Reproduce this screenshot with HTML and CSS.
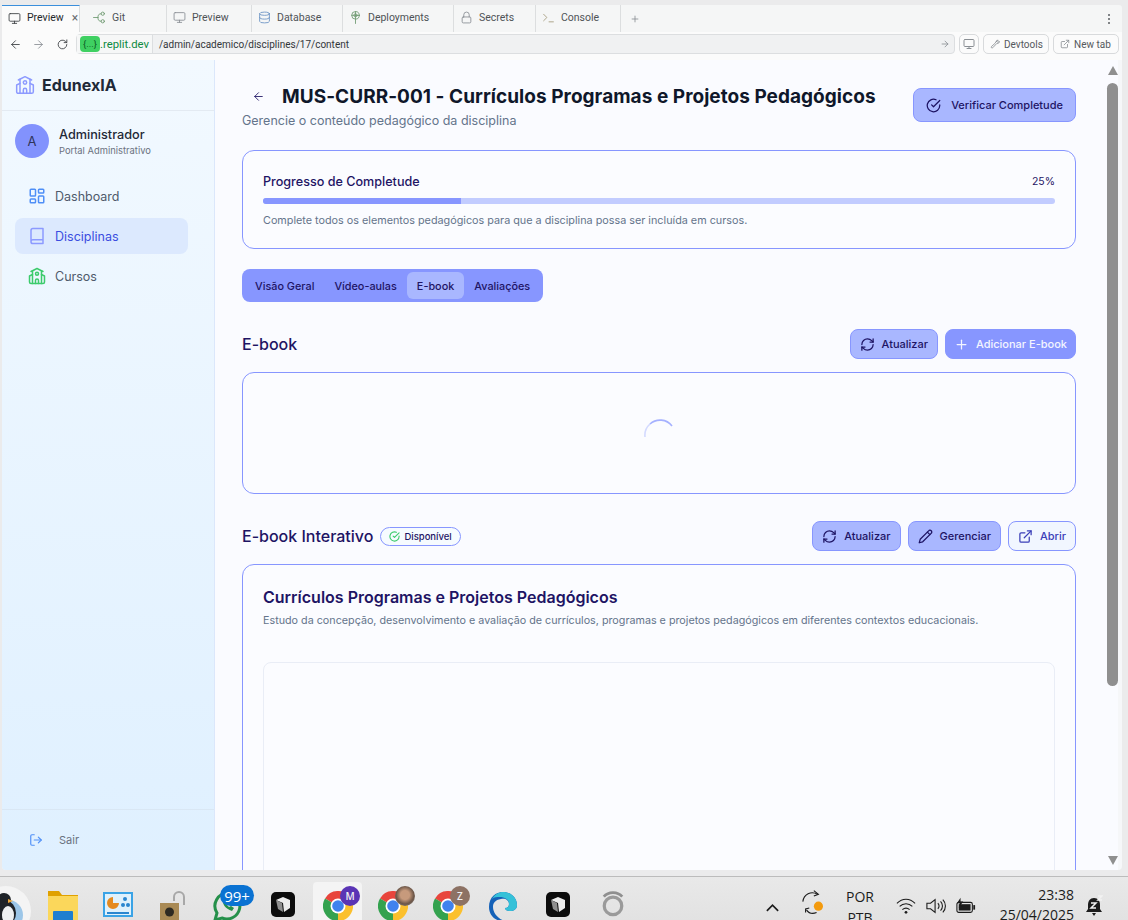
FILE: index.html
```html
<!DOCTYPE html>
<html lang="pt-BR">
<head>
<meta charset="utf-8">
<title>EdunexIA</title>
<link rel="stylesheet" href="styles.css">
</head>
<body>
<svg class="sprite" aria-hidden="true">
  <symbol id="i-school" viewBox="0 0 24 24"><path d="m4 6 8-4 8 4"/><path d="m18 10 4 2v8a2 2 0 0 1-2 2H4a2 2 0 0 1-2-2v-8l4-2"/><path d="M14 22v-4a2 2 0 0 0-4 0v4"/><path d="M18 5v17"/><path d="M6 5v17"/><circle cx="12" cy="9" r="2"/></symbol>
  <symbol id="i-dash" viewBox="0 0 24 24"><rect x="3" y="3" width="7" height="9" rx="1"/><rect x="14" y="3" width="7" height="5" rx="1"/><rect x="14" y="12" width="7" height="9" rx="1"/><rect x="3" y="16" width="7" height="5" rx="1"/></symbol>
  <symbol id="i-book" viewBox="0 0 24 24"><path d="M4 19.5v-15A2.5 2.5 0 0 1 6.5 2H20v20H6.5a2.5 2.5 0 0 1 0-5H20"/></symbol>
  <symbol id="i-logout" viewBox="0 0 24 24"><path d="M9 21H5a2 2 0 0 1-2-2V5a2 2 0 0 1 2-2h4"/><path d="m16 17 5-5-5-5"/><path d="M21 12H9"/></symbol>
  <symbol id="i-left" viewBox="0 0 24 24"><path d="m12 19-7-7 7-7"/><path d="M19 12H5"/></symbol>
  <symbol id="i-right" viewBox="0 0 24 24"><path d="m12 5 7 7-7 7"/><path d="M5 12h14"/></symbol>
  <symbol id="i-check" viewBox="0 0 24 24"><path d="M22 11.08V12a10 10 0 1 1-5.93-9.14"/><path d="m9 11 3 3L22 4"/></symbol>
  <symbol id="i-refresh" viewBox="0 0 24 24"><path d="M3 12a9 9 0 0 1 9-9 9.75 9.75 0 0 1 6.74 2.74L21 8"/><path d="M21 3v5h-5"/><path d="M21 12a9 9 0 0 1-9 9 9.75 9.75 0 0 1-6.74-2.74L3 16"/><path d="M8 16H3v5"/></symbol>
  <symbol id="i-reload" viewBox="0 0 24 24"><path d="M20 12a8 8 0 1 1-2.4-5.7L20 8.5"/><path d="M20 3.5v5h-5"/></symbol>
  <symbol id="i-plus" viewBox="0 0 24 24"><path d="M5 12h14"/><path d="M12 5v14"/></symbol>
  <symbol id="i-pencil" viewBox="0 0 24 24"><path d="M17 3a2.85 2.83 0 1 1 4 4L7.5 20.5 2 22l1.5-5.5Z"/><path d="m15 5 4 4"/></symbol>
  <symbol id="i-ext" viewBox="0 0 24 24"><path d="M15 3h6v6"/><path d="M10 14 21 3"/><path d="M18 13v6a2 2 0 0 1-2 2H5a2 2 0 0 1-2-2V8a2 2 0 0 1 2-2h6"/></symbol>
  <symbol id="i-monitor" viewBox="0 0 24 24"><rect x="2" y="3" width="20" height="14" rx="2"/><path d="M8 21h8"/><path d="M12 17v4"/></symbol>
  <symbol id="i-git" viewBox="0 0 24 24"><path d="M1 12h8"/><path d="M9 12c0-5 2-7 6-7"/><path d="M9 12c0 5 2 7 6 7"/><circle cx="18" cy="5" r="3"/><circle cx="18" cy="19" r="3"/></symbol>
  <symbol id="i-db" viewBox="0 0 24 24"><ellipse cx="12" cy="5" rx="9" ry="3"/><path d="M3 5v14a9 3 0 0 0 18 0V5"/><path d="M3 12a9 3 0 0 0 18 0"/></symbol>
  <symbol id="i-deploy" viewBox="0 0 24 24"><circle cx="12" cy="8" r="7"/><circle cx="12" cy="8" r="3"/><path d="M12 1v22"/><path d="M5 8h14"/></symbol>
  <symbol id="i-lock" viewBox="0 0 24 24"><rect x="4" y="11" width="16" height="11" rx="2"/><path d="M7 11V7a5 5 0 0 1 10 0v4"/></symbol>
  <symbol id="i-term" viewBox="0 0 24 24"><path d="m3 6 6 6-6 6"/><path d="M13 20h8"/></symbol>
  <symbol id="i-wrench" viewBox="0 0 24 24"><path d="M14.7 6.3a4 4 0 0 1 5-3.4l-3 3 2.400 2.400 3-3a4 4 0 0 1-5.400 5L6.500 21a2 2 0 0 1-3-3l9.200-8.200a4 4 0 0 1 2-3.500Z"/></symbol>
  <symbol id="i-chrome" viewBox="0 0 30 30"><path class="c-red" d="M15 15 2 7.500A15 15 0 0 1 28 7.500Z"/><path class="c-yel" d="M15 15 28 7.500A15 15 0 0 1 15 30Z"/><path class="c-grn" d="M15 15V30A15 15 0 0 1 2 7.500Z"/><circle class="c-wht" cx="15" cy="15" r="7.500"/><circle class="c-blu" cx="15" cy="15" r="5.800"/></symbol>
  <symbol id="i-cube" viewBox="0 0 24 30"><rect class="c-blk" width="24" height="25" y="0" rx="5"/><path class="c-lit" d="m12 5 7 3v8l-6 4-1-9-7-3Z"/><path class="c-mid" d="m5 8 6 3 1 9-5-3Z"/></symbol>
</svg>

<div class="screen">
  <header class="browser">
    <nav class="tabstrip">
      <div class="btab btab-active"><svg class="ic ic13 dark"><use href="#i-monitor"/></svg><span>Preview</span><span class="btab-x">×</span></div>
      <div class="btab btab-git"><svg class="ic ic13 git"><use href="#i-git"/></svg><span>Git</span></div>
      <div class="btab btab-prev"><svg class="ic ic13 grey"><use href="#i-monitor"/></svg><span>Preview</span></div>
      <div class="btab btab-db"><svg class="ic ic13 blue"><use href="#i-db"/></svg><span>Database</span></div>
      <div class="btab btab-dep"><svg class="ic ic13 git"><use href="#i-deploy"/></svg><span>Deployments</span></div>
      <div class="btab btab-sec"><svg class="ic ic13 grey"><use href="#i-lock"/></svg><span>Secrets</span></div>
      <div class="btab btab-con"><svg class="ic ic13 tan"><use href="#i-term"/></svg><span>Console</span></div>
      <svg class="ic ic10 grey add"><use href="#i-plus"/></svg>
      <div class="kebab"><i></i><i></i><i></i></div>
    </nav>
    <div class="urlrow">
      <svg class="ic ic13 dark nav-ic"><use href="#i-left"/></svg>
      <svg class="ic ic13 grey nav-ic nav-fwd"><use href="#i-right"/></svg>
      <svg class="ic ic13 dark nav-ic nav-rel"><use href="#i-reload"/></svg>
      <div class="urlbar">
        <div class="host"><span class="chip">{...}</span><span>.replit.dev</span></div>
        <span class="path">/admin/academico/disciplines/17/content</span>
        <svg class="ic ic10 grey go"><use href="#i-right"/></svg>
      </div>
      <button class="ubtn ubtn-ic"><svg class="ic ic12 grey"><use href="#i-monitor"/></svg></button>
      <button class="ubtn"><svg class="ic ic10 grey"><use href="#i-wrench"/></svg>Devtools</button>
      <button class="ubtn"><svg class="ic ic10 grey"><use href="#i-ext"/></svg>New tab</button>
    </div>
  </header>

  <div class="app">
    <aside class="sidebar">
      <div class="brand"><svg class="ic ic20 indigo"><use href="#i-school"/></svg><span>EdunexIA</span></div>
      <div class="user">
        <div class="avatar">A</div>
        <div>
          <div class="user-name">Administrador</div>
          <div class="user-role">Portal Administrativo</div>
        </div>
      </div>
      <nav class="side-nav">
        <a class="side-item"><svg class="ic ic18 sideblue"><use href="#i-dash"/></svg>Dashboard</a>
        <a class="side-item side-active"><svg class="ic ic18 indigo"><use href="#i-book"/></svg>Disciplinas</a>
        <a class="side-item"><svg class="ic ic18 green"><use href="#i-school"/></svg>Cursos</a>
      </nav>
      <div class="side-foot"><svg class="ic ic14 sideblue"><use href="#i-logout"/></svg><span>Sair</span></div>
    </aside>

    <main class="main">
      <div class="page-head">
        <div>
          <div class="title-row">
            <svg class="ic ic13 navy back"><use href="#i-left"/></svg>
            <h1>MUS-CURR-001 - Currículos Programas e Projetos Pedagógicos</h1>
          </div>
          <p class="sub">Gerencie o conteúdo pedagógico da disciplina</p>
        </div>
        <button class="btn btn-soft btn-verify"><svg class="ic ic15"><use href="#i-check"/></svg>Verificar Completude</button>
      </div>

      <section class="card progress-card">
        <div class="progress-row"><span class="progress-label">Progresso de Completude</span><span class="progress-val">25%</span></div>
        <div class="bar"><div class="bar-fill" style="width:25%"></div></div>
        <p class="hint">Complete todos os elementos pedagógicos para que a disciplina possa ser incluída em cursos.</p>
      </section>

      <div class="tabs">
        <span class="tab">Visão Geral</span>
        <span class="tab">Vídeo-aulas</span>
        <span class="tab tab-active">E-book</span>
        <span class="tab">Avaliações</span>
      </div>

      <div class="sec-head">
        <h2>E-book</h2>
        <div class="actions">
          <button class="btn btn-soft"><svg class="ic ic15"><use href="#i-refresh"/></svg>Atualizar</button>
          <button class="btn btn-solid"><svg class="ic ic15"><use href="#i-plus"/></svg>Adicionar E-book</button>
        </div>
      </div>
      <section class="card loading-card">
        <svg class="spinner" viewBox="0 0 32 32"><path class="spin-tail" d="M1 18A15 15 0 0 1 6 5"/><path class="spin-head" d="M6 5A15 15 0 0 1 28 7"/></svg>
      </section>

      <div class="sec-head">
        <div class="sec-title">
          <h2>E-book Interativo</h2>
          <span class="badge"><svg class="ic ic11 green"><use href="#i-check"/></svg>Disponível</span>
        </div>
        <div class="actions">
          <button class="btn btn-soft"><svg class="ic ic15"><use href="#i-refresh"/></svg>Atualizar</button>
          <button class="btn btn-soft"><svg class="ic ic15"><use href="#i-pencil"/></svg>Gerenciar</button>
          <button class="btn btn-line"><svg class="ic ic15"><use href="#i-ext"/></svg>Abrir</button>
        </div>
      </div>
      <section class="card ebook-card">
        <h3>Currículos Programas e Projetos Pedagógicos</h3>
        <p class="hint ebook-desc">Estudo da concepção, desenvolvimento e avaliação de currículos, programas e projetos pedagógicos em diferentes contextos educacionais.</p>
        <div class="viewer"></div>
      </section>
    </main>

    <div class="scrollbar">
      <i class="tri-up"></i>
      <div class="thumb"></div>
      <i class="tri-down"></i>
    </div>
  </div>

  <footer class="taskbar">
    <div class="tb-left">
      <div class="tb-peng">
        <svg class="peng" viewBox="0 0 32 34"><circle class="p-disc" cx="6" cy="25" r="25"/><circle class="p-sky" cx="8" cy="29" r="15"/><ellipse class="p-blk" cx="4" cy="14" rx="7" ry="7"/><ellipse class="p-blk" cx="6" cy="27" rx="10" ry="12"/><ellipse class="p-wht" cx="8" cy="29" rx="6" ry="9"/><path class="p-beak" d="M8 13l5 2-5 2Z"/></svg>
      </div>
      <div class="tb-slot"><svg class="tb-ic" viewBox="0 0 30 30"><path class="f-tab" d="M0 0h11l3 4h16v26H0Z"/><rect class="f-front" y="5" width="30" height="25"/><rect class="f-blue" x="5" y="20" width="20" height="10" rx="1"/></svg></div>
      <div class="tb-slot"><svg class="tb-ic" viewBox="0 0 30 30"><rect class="m-body" width="30" height="25" y="1"/><rect class="m-glass" x="2" y="3" width="26" height="21"/><path class="m-pie" d="M10 6a6 6 0 1 0 6 6h-6Z"/><circle class="m-dot" cx="22" cy="8" r="2"/><circle class="m-dot" cx="25" cy="14" r="2"/><circle class="m-dot" cx="20" cy="14" r="2"/><rect class="m-bar" x="4" y="21" width="22" height="2"/></svg></div>
      <div class="tb-slot"><svg class="tb-ic tb-lock" viewBox="0 0 26 30"><path class="l-shackle" d="M14 10V6a5 5 0 0 1 10 0v8"/><rect class="l-body" y="12" width="19" height="19"/><circle class="l-gear" cx="9.500" cy="21" r="4.500"/></svg></div>
      <div class="tb-slot">
        <svg class="tb-ic" viewBox="0 0 30 30"><path class="w-ring" d="M15 2a13 13 0 0 0-11 20l-2 7 7-2a13 13 0 1 0 6-25Z"/><path class="w-phone" d="M10 9c-1 3 2 9 9 11l2-3-3-2-2 1-3-3 1-2-2-3Z"/></svg>
        <span class="pill">99+</span>
      </div>
      <div class="tb-slot"><svg class="tb-ic tb-cube" viewBox="0 0 24 30"><use href="#i-cube"/></svg></div>
      <div class="tb-slot tb-active">
        <svg class="tb-ic"><use href="#i-chrome"/></svg>
        <span class="prof prof-m">M</span>
      </div>
      <div class="tb-slot">
        <svg class="tb-ic"><use href="#i-chrome"/></svg>
        <span class="prof prof-photo"></span>
      </div>
      <div class="tb-slot">
        <svg class="tb-ic"><use href="#i-chrome"/></svg>
        <span class="prof prof-z">Z</span>
      </div>
      <div class="tb-slot"><svg class="tb-ic" viewBox="0 0 30 30"><path class="e-blue" d="M1 16C1 6 8 1 15 1c8 0 14 6 14 13 0 4-3 6-7 6-3 0-5-1-5-3 3 0 4-2 4-4 0-4-4-6-8-5C7 9 5 12 5 16c0 6 5 12 12 14C8 31 1 25 1 16Z"/><path class="e-green" d="M4 8C7 3 11 1 15 1c8 0 14 6 14 13 0 4-3 6-7 6-3 0-5-1-5-3 3 0 4-2 4-4 0-5-5-7-9-7-3 0-6 0-8 2Z"/></svg></div>
      <div class="tb-slot"><svg class="tb-ic tb-cube" viewBox="0 0 24 30"><use href="#i-cube"/></svg></div>
      <div class="tb-slot"><svg class="tb-ic tb-ring" viewBox="0 0 26 34"><path class="r-arc" d="M3 8c5-6 15-6 20 0"/><circle class="r-o" cx="13" cy="18" r="9.500"/></svg></div>
    </div>
    <div class="tb-right">
      <svg class="tray-chev" viewBox="0 0 16 10"><path d="m2 8 6-6 6 6"/></svg>
      <svg class="tray-sync" viewBox="0 0 24 28"><path class="t-line" d="M2 13C3 5 11 1 18 5"/><path class="t-line" d="M14 1l5 4-5 2"/><path class="t-line" d="M17 25c-5 2-9 0-11-3"/><path class="t-line" d="M9 20l-4 1 0 4"/><circle class="t-dot" cx="19" cy="18" r="5"/></svg>
      <div class="tray-lang"><span>POR</span><span>PTB</span></div>
      <svg class="tray-ic" viewBox="0 0 22 18"><path class="t-line" d="M1 6c6-6 14-6 20 0"/><path class="t-line" d="M4 9.500c4-4 10-4 14 0"/><path class="t-line" d="M7 13c2.500-2 5.500-2 8 0"/><circle class="t-fill" cx="11" cy="16" r="1.500"/></svg>
      <svg class="tray-ic" viewBox="0 0 22 18"><path class="t-line" d="M1 6h4l5-4v14l-5-4H1Z"/><path class="t-line" d="M13 6a4 4 0 0 1 0 6"/><path class="t-line" d="M16 4a7 7 0 0 1 0 10"/><path class="t-line" d="M18.500 2a10 10 0 0 1 0 14"/></svg>
      <svg class="tray-ic" viewBox="0 0 22 18"><rect class="t-line" x="1" y="5" width="17" height="11" rx="2"/><rect class="t-fill" x="3" y="7" width="13" height="7"/><rect class="t-fill" x="19" y="8" width="2" height="5"/><path class="t-fill" d="M5 0 1 6h3l-1 5 5-7H5Z"/></svg>
      <div class="clock"><span>23:38</span><span>25/04/2025</span></div>
      <svg class="tray-bell" viewBox="0 0 18 24"><path class="t-fill" d="M9 4C5 4 3 7 3 11v4l-2 3h16l-2-3v-4c0-4-2-7-6-7Zm-2 15h4l-2 3Z"/><path class="t-zz" d="M6 9h5l-5 5h5"/><path class="t-zz" d="M13 2h4l-4 4h4"/></svg>
    </div>
  </footer>
</div>
</body>
</html>
```

FILE: styles.css
```css
* { box-sizing: border-box; }
html, body { margin: 0; padding: 0; }
body { width: 1128px; height: 920px; overflow: hidden; background: #ebebec; font-family: Inter, "Liberation Sans", sans-serif; }
.sprite { display: none; }
h1, h2, h3, p { margin: 0; }
button { font-family: inherit; cursor: pointer; }
.screen { width: 1128px; height: 920px; display: flex; flex-direction: column; overflow: hidden; }

/* icons */
.ic { flex: none; fill: none; stroke: currentColor; stroke-width: 2; stroke-linecap: round; stroke-linejoin: round; }
.ic10 { width: 10px; height: 10px; }
.ic11 { width: 11px; height: 11px; stroke-width: 2.4; }
.ic12 { width: 12px; height: 12px; }
.ic13 { width: 13px; height: 13px; stroke-width: 1.6; }
.ic14 { width: 14px; height: 14px; }
.ic15 { width: 15px; height: 15px; }
.ic18 { width: 18px; height: 18px; }
.ic20 { width: 20px; height: 20px; stroke-width: 1.8; }
.dark { color: #3c4043; }
.grey { color: #8a8f94; }
.git { color: #6f9a72; }
.blue { color: #6b93c4; }
.tan { color: #a39a7c; }
.indigo { color: #8c9aff; }
.sideblue { color: #4f8ff7; }
.green { color: #3ccb6c; }
.navy { color: #1e1464; }

/* browser chrome */
.browser { flex: none; height: 60px; padding: 5px 6px 0 2px; display: flex; flex-direction: column; }
.tabstrip { height: 27px; flex: none; display: flex; align-items: stretch; padding-bottom: 0; background: #f5f6f6; border-radius: 3px 3px 0 0; font: 10.500px/14px Roboto, sans-serif; color: #4f5357; }
.btab { display: flex; align-items: center; gap: 6px; padding-left: 13px; padding-bottom: 2px; border-right: 1px solid #dcdedf; }
.btab-active { width: 78px; padding-left: 6px; gap: 6px; background: #fbfbfb; color: #26292c; border-top: 1px solid #3b8fdc; }
.btab-x { margin-left: 2px; font-size: 12px; color: #6a6e72; }
.btab-git { width: 87px; }
.btab-prev { width: 85px; padding-left: 6px; }
.btab-db { width: 91px; padding-left: 6px; }
.btab-dep { width: 111px; padding-left: 6px; }
.btab-sec { width: 82px; padding-left: 6px; }
.btab-con { width: 85px; padding-left: 6px; }
.add { align-self: center; margin-left: 9px; }
.kebab { margin-left: auto; margin-right: 12px; align-self: center; display: flex; flex-direction: column; gap: 2px; }
.kebab i { display: block; width: 2px; height: 2px; border-radius: 50%; background: #5a5e62; }
.urlrow { flex: none; height: 28px; display: flex; align-items: center; background: #fbfbfb; padding-bottom: 4px; font: 10px Roboto, sans-serif; color: #55595d; }
.nav-ic { margin-left: 7px; }
.nav-fwd { margin-left: 10px; }
.nav-rel { margin-left: 11px; margin-right: 7px; }
.urlbar { width: 879px; height: 20px; display: flex; align-items: center; background: #f0f1f2; border: 1px solid #dcdee0; border-radius: 4px; font-size: 10px; color: #33373a; }
.host { height: 100%; display: flex; align-items: center; padding: 0 3px 0 3px; background: #f6f7f7; border-right: 1px solid #dcdee0; color: #0d8a3f; font-size: 11.300px; }
.chip { padding: 1px 3px; background: #3fd062; border-radius: 4px; color: #0b5a24; font-size: 9.500px; line-height: 14px; }
.path { margin-left: 6px; }
.go { margin-left: auto; margin-right: 4px; }
.ubtn { height: 20px; margin-left: 4px; padding: 0 6px; display: flex; align-items: center; gap: 4px; background: #fbfbfb; border: 1px solid #d8dadc; border-radius: 5px; font: 10px Roboto, sans-serif; color: #55595d; width: 66px; }
.ubtn-ic { width: 20px; padding: 0 3px; }

/* app */
.app { flex: none; height: 810px; margin: 0 6px 0 2px; display: flex; overflow: hidden; background: #f6f7f9; border-radius: 0 0 4px 4px; }
.sidebar { flex: none; width: 213px; display: flex; flex-direction: column; background: linear-gradient(#f2f9ff, #dff0ff); border-right: 1px solid #dbe7fb; color: #4b5563; }
.brand { flex: none; height: 51px; padding: 0 13px; display: flex; align-items: center; gap: 7px; border-bottom: 1px solid #e3eaf2; font-size: 16px; font-weight: 700; color: #1f2937; }
.user { flex: none; display: flex; align-items: center; gap: 10px; padding: 13px 13px 0; }
.avatar { width: 34px; height: 34px; border-radius: 50%; display: flex; align-items: center; justify-content: center; background: #8292fd; font-size: 13px; color: #2f3458; }
.user-name { padding-top: 1px; font-size: 12.700px; font-weight: 500; line-height: 16px; color: #1f2937; }
.user-role { margin-top: 1px; font-size: 9.400px; line-height: 13px; color: #6b7280; }
.side-nav { margin-top: 20px; padding: 0 26px 0 13px; display: flex; flex-direction: column; gap: 4px; }
.side-item { height: 36px; padding-left: 13px; display: flex; align-items: center; gap: 9px; border-radius: 8px; font-size: 12.500px; color: #4f5a6b; }
.side-active { background: #dce9fe; color: #3b4de0; }
.side-foot { margin-top: auto; height: 61px; padding-left: 27px; display: flex; align-items: center; gap: 16px; border-top: 1px solid #d9e7f4; font-size: 11px; color: #6b7280; }

/* main */
.main { flex: 1; min-width: 0; padding: 22px 28px 0 27px; overflow: hidden; background: #fafbff; }
.page-head { display: flex; justify-content: space-between; align-items: flex-start; height: 48px; margin-bottom: 20px; }
.title-row { display: flex; align-items: center; height: 29px; }
.back { margin-left: 10px; margin-right: 17px; }
h1 { font-size: 19px; line-height: 30px; font-weight: 700; color: #0f172a; letter-spacing: .04px; }
.sub { font-size: 12.500px; line-height: 20px; color: #64748b; }
.btn { height: 30px; padding: 0 9px; display: inline-flex; align-items: center; gap: 7px; border-radius: 8px; border: 1px solid #8796ff; font-size: 11px; font-weight: 500; color: #1e1464; }
.btn-soft { background: #a9b7ff; }
.btn-solid { padding: 0 8px; background: #8796ff; color: #f3f5ff; }
.btn-line { background: #f1f6ff; color: #3b3fb8; }
.btn-verify { height: 34px; margin-top: 6px; padding: 0 12px; gap: 10px; }
.card { border: 1px solid #8796ff; border-radius: 12px; background: #fbfcff; }
.progress-card { padding: 20px; height: 99px; }
.progress-row { display: flex; justify-content: space-between; height: 20px; align-items: center; font-size: 10.500px; color: #1e1464; }
.progress-label { font-size: 12.600px; font-weight: 500; }
.bar { margin-top: 7px; height: 6px; border-radius: 3px; overflow: hidden; background: #c2ccff; }
.bar-fill { height: 100%; background: #8796ff; }
.hint { font-size: 10.800px; line-height: 16px; color: #64748b; }
.progress-card .hint { margin-top: 9px; }
.tabs { display: inline-flex; margin-top: 20px; padding: 3px; height: 33px; background: #8796ff; border-radius: 8px; vertical-align: top; }
.tab { height: 27px; padding: 0 10px; display: flex; align-items: center; border-radius: 6px; font-size: 10.850px; font-weight: 500; color: #1e1464; }
.tab-active { background: #a9b7ff; }
.sec-head { display: flex; justify-content: space-between; align-items: center; height: 30px; margin-top: 27px; margin-bottom: 13px; }
h2 { font-size: 16px; font-weight: 500; color: #1e1464; }
.sec-title { display: flex; align-items: center; gap: 7px; }
.actions { display: flex; gap: 7px; }
.badge { height: 19px; padding: 0 8px; display: inline-flex; align-items: center; gap: 4px; border: 1px solid #8796ff; border-radius: 10px; background: #f6fbff; font-size: 9.500px; font-weight: 500; color: #1e1464; }
.loading-card { height: 122px; padding: 4px 0 0 1px; display: flex; align-items: center; justify-content: center; }
.spinner { width: 32px; height: 32px; fill: none; }
.spin-tail { stroke: #d3daff; stroke-width: 1.600; }
.spin-head { stroke: #a5b1ff; stroke-width: 1.600; }
.ebook-card { height: 700px; padding: 20px; }
h3 { font-size: 16px; line-height: 24px; font-weight: 600; color: #1e1464; }
.ebook-desc { margin-top: 4px; font-size: 10.750px; }
.viewer { margin-top: 33px; height: 500px; background: #fbfcff; border: 1px solid #e9edf6; border-radius: 8px; }

/* scrollbar */
.scrollbar { flex: none; width: 14px; margin-right: 4px; padding-left: 3px; display: flex; flex-direction: column; align-items: center; background: #fafbff; }
.tri-up, .tri-down { flex: none; width: 0; height: 0; border-left: 5.500px solid transparent; border-right: 5.500px solid transparent; }
.tri-up { margin-top: 6px; border-bottom: 9px solid #8f8f8f; }
.tri-down { margin-top: auto; margin-bottom: 5px; border-top: 9px solid #8f8f8f; }
.thumb { flex: none; width: 11px; height: 603px; margin-top: 8px; background: #8f8f8f; border-radius: 6px; }

/* taskbar */
.taskbar { flex: none; height: 44px; margin-top: 6px; position: relative; display: flex; justify-content: space-between; border-top: 1px solid #bcbcbc; background: linear-gradient(#e9e9e9, #e2e2e2); overflow: hidden; font-family: "Open Sans", sans-serif; color: #1c1c1c; }
.tb-left { display: flex; }
.tb-peng { width: 35px; height: 43px; }
.peng { display: block; width: 32px; height: 34px; margin-top: 9px; }
.p-disc { fill: #f4f4f4; }
.p-sky { fill: #9cc6e8; }
.p-blk { fill: #1e2227; }
.p-wht { fill: #eef0f2; }
.p-beak { fill: #e8a33a; }
.tb-slot { width: 55px; height: 43px; position: relative; display: flex; justify-content: center; padding-top: 14px; }
.tb-ic { display: block; width: 30px; height: 30px; flex: none; }
.tb-lock { width: 26px; }
.tb-cube { width: 24px; height: 30px; margin-top: 1px; }
.tb-ring { width: 24px; height: 32px; margin-top: -2px; }
.tb-active { margin: 5px 3px 0; width: 49px; padding-top: 9px; background: #f4f4f4; border-radius: 4px 4px 0 0; }
.pill { position: absolute; left: 20px; top: 8px; width: 34px; height: 21px; display: flex; align-items: center; justify-content: center; background: #0a72d2; border-radius: 11px; color: #fff; font-size: 15px; }
.prof { position: absolute; top: 9px; left: 30px; width: 20px; height: 20px; border-radius: 50%; display: flex; align-items: center; justify-content: center; color: #f0f0f0; font-size: 10px; font-weight: 600; }
.tb-active .prof { top: 4px; left: 27px; }
.prof-m { background: #5a34b5; }
.prof-z { background: #8d7264; }
.prof-photo { background: radial-gradient(circle at 50% 45%, #c79a7c 30%, #6c5648 60%, #9a9a9a 100%); }
.c-red { fill: #e8453c; }
.c-yel { fill: #fbc02d; }
.c-grn { fill: #34a24f; }
.c-wht { fill: #fff; }
.c-blu { fill: #3f82ee; }
.c-blk { fill: #0c0c0c; }
.c-lit { fill: #ededed; }
.c-mid { fill: #8f8f8f; }
.f-tab { fill: #e0a100; }
.f-front { fill: #fbd75b; }
.f-blue { fill: #1f7fd0; }
.m-body { fill: #3aa3e6; }
.m-glass { fill: #dff1fc; }
.m-pie { fill: #e58a1f; }
.m-dot { fill: #2a86cf; }
.m-bar { fill: #2a86cf; }
.l-shackle { fill: none; stroke: #a8a8a8; stroke-width: 2; }
.l-body { fill: #a98a55; }
.l-gear { fill: #2d2a22; }
.w-ring { fill: none; stroke: #25904a; stroke-width: 3; }
.w-phone { fill: #25904a; }
.e-blue { fill: #1461b8; }
.e-green { fill: #35c1d8; }
.r-arc { fill: none; stroke: #8f8f8f; stroke-width: 3; }
.r-o { fill: none; stroke: #9a9a9a; stroke-width: 3.500; }
.tb-right { display: flex; align-items: flex-start; padding-right: 25px; }
.tray-chev { width: 15px; height: 10px; margin-top: 26px; fill: none; stroke: #1c1c1c; stroke-width: 1.800; }
.tray-sync { width: 22px; height: 27px; margin: 12px 0 0 21px; }
.t-line { fill: none; stroke: #1c1c1c; stroke-width: 1.200; }
.t-fill { fill: #1c1c1c; }
.t-dot { fill: #f39a0d; }
.t-zz { fill: none; stroke: #f2f2f2; stroke-width: 1.500; }
.tray-lang { width: 30px; margin-left: 22px; padding-top: 9px; display: flex; flex-direction: column; align-items: center; font-size: 14px; line-height: 21px; }
.tray-ic { width: 20px; height: 18px; margin-top: 20px; margin-left: 10px; }
.tray-lang + .tray-ic { margin-left: 21px; }
.clock { width: 78px; margin-left: 20px; padding-top: 8px; display: flex; flex-direction: column; align-items: flex-end; font-size: 14px; line-height: 20px; }
.tray-bell { width: 18px; height: 24px; margin: 17px 0 0 11px; }
```
